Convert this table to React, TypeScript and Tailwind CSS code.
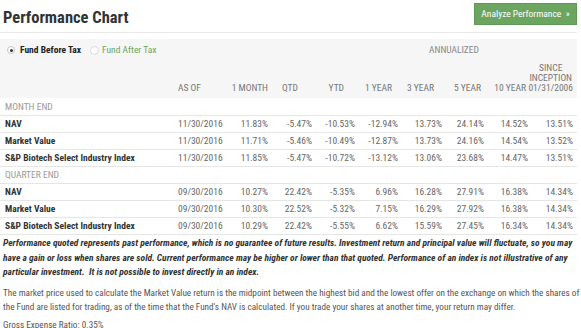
const rows = {
  month: [
    { name: "NAV", asOf: "11/30/2016", vals: ["11.83%", "-5.47%", "-10.53%", "-12.94%", "13.73%", "24.14%", "14.52%", "13.51%"] },
    { name: "Market Value", asOf: "11/30/2016", vals: ["11.71%", "-5.46%", "-10.49%", "-12.87%", "13.73%", "24.16%", "14.54%", "13.52%"] },
    { name: "S&P Biotech Select Industry Index", asOf: "11/30/2016", vals: ["11.85%", "-5.47%", "-10.72%", "-13.12%", "13.06%", "23.68%", "14.47%", "13.51%"] },
  ],
  quarter: [
    { name: "NAV", asOf: "09/30/2016", vals: ["10.27%", "22.42%", "-5.35%", "6.96%", "16.28%", "27.91%", "16.38%", "14.34%"] },
    { name: "Market Value", asOf: "09/30/2016", vals: ["10.30%", "22.52%", "-5.32%", "7.15%", "16.29%", "27.92%", "16.38%", "14.34%"] },
    { name: "S&P Biotech Select Industry Index", asOf: "09/30/2016", vals: ["10.29%", "22.42%", "-5.55%", "6.62%", "15.59%", "27.45%", "16.34%", "14.34%"] },
  ],
};

// column grid shared by header and body
const cols = "grid grid-cols-[178px_48px_42px_44px_43px_43px_44px_42px_44px_45px]";

const DataRow = ({ name, asOf, vals }: { name: string; asOf: string; vals: string[] }) => (
  <div className={`${cols} h-[17px] items-center border-b border-[#e6e6e6]`}>
    <div className="pl-[5px] font-bold text-[#333]">{name}</div>
    <div className="text-[#666]">{asOf}</div>
    {vals.map((v, i) => (
      <div key={i} className="text-right text-[#666]">
        {v}
      </div>
    ))}
  </div>
);

const SectionRow = ({ label }: { label: string }) => (
  <div className="h-[17px] flex items-center pl-[5px] border-b border-[#e6e6e6] text-[#999]">{label}</div>
);

export default function App() {
  return (
    <div className="w-[581px] h-[328px] overflow-hidden bg-white text-[#333] text-[9.5px] leading-[12px] font-[Roboto,sans-serif] [font-stretch:75%]">
      {/* title bar */}
      <div className="flex items-start justify-between h-[33px] border-b border-[#e8e8e8] mr-[4px]">
        <h1 className="pl-[3px] pt-[8px] text-[16.5px] leading-[20px] font-bold text-[#333]">Performance Chart</h1>
        <button className="mt-[3px] h-[22px] w-[103px] bg-[#6ba55f] text-white text-[9.5px] border border-[#5e9a53]">
          Analyze Performance &nbsp;»
        </button>
      </div>

      {/* header panel */}
      <div className="mt-[6px] mr-[4px] h-[59px] bg-[#f6f6f6]">
        <div className={`${cols} h-[22px] items-center`}>
          <div className="col-span-5 flex items-center gap-[9px] pl-[7px]">
            <span className="flex items-center gap-[5px] font-bold text-[#222]">
              <span className="w-[8px] h-[8px] rounded-full border border-[#c4c4c4] bg-white flex items-center justify-center">
                <span className="w-[3px] h-[3px] rounded-full bg-[#333]" />
              </span>
              Fund Before Tax
            </span>
            <span className="flex items-center gap-[3px] text-[#6ba55f]">
              <span className="w-[9px] h-[9px] rounded-full border border-[#dadada] bg-white" />
              Fund After Tax
            </span>
          </div>
          <div className="col-span-5 text-center pr-[20px] text-[#888]">ANNUALIZED</div>
        </div>
        <div className={`${cols} h-[37px] items-end pb-[5px] leading-[10px] text-[#777]`}>
          <div />
          <div>AS OF</div>
          <div className="text-right">1 MONTH</div>
          <div className="text-right pr-[14px]">QTD</div>
          <div className="text-right pr-[11px]">YTD</div>
          <div className="text-right pr-[6px]">1 YEAR</div>
          <div className="text-right pr-[8px]">3 YEAR</div>
          <div className="text-right pr-[3px]">5 YEAR</div>
          <div className="text-right pr-[2px]">10 YEAR</div>
          <div className="flex justify-end">
            <div className="text-center">
              SINCE
              <br />
              INCEPTION
              <br />
              01/31/2006
            </div>
          </div>
        </div>
      </div>

      {/* table body */}
      <div className="mt-[1px] mr-[4px]">
        <SectionRow label="MONTH END" />
        {rows.month.map((r) => (
          <DataRow key={"m" + r.name} {...r} />
        ))}
        <SectionRow label="QUARTER END" />
        {rows.quarter.map((r) => (
          <DataRow key={"q" + r.name} {...r} />
        ))}
      </div>

      {/* disclaimers */}
      <p className="mt-[1px] pl-[3px] leading-[14.5px] font-bold italic text-[#333]">
        Performance quoted represents past performance, which is no guarantee of future results. Investment return and principal value will fluctuate, so you may
        <br />
        have a gain or loss when shares are sold. Current performance may be higher or lower than that quoted. Performance of an index is not illustrative of any
        <br />
        particular investment.&nbsp; It is not possible to invest directly in an index.
      </p>
      <p className="mt-[6px] pl-[3px] text-[9.2px] leading-[14px] text-[#555] whitespace-nowrap">
        The market price used to calculate the Market Value return is the midpoint between the highest bid and the lowest offer on the exchange on which the shares of
        <br />
        the Fund are listed for trading, as of the time that the Fund's NAV is calculated. If you trade your shares at another time, your return may differ.
      </p>
      <p className="mt-[4px] pl-[3px] text-[9.2px] leading-[14px] text-[#555]">Gross Expense Ratio: 0.35%</p>
    </div>
  );
}
